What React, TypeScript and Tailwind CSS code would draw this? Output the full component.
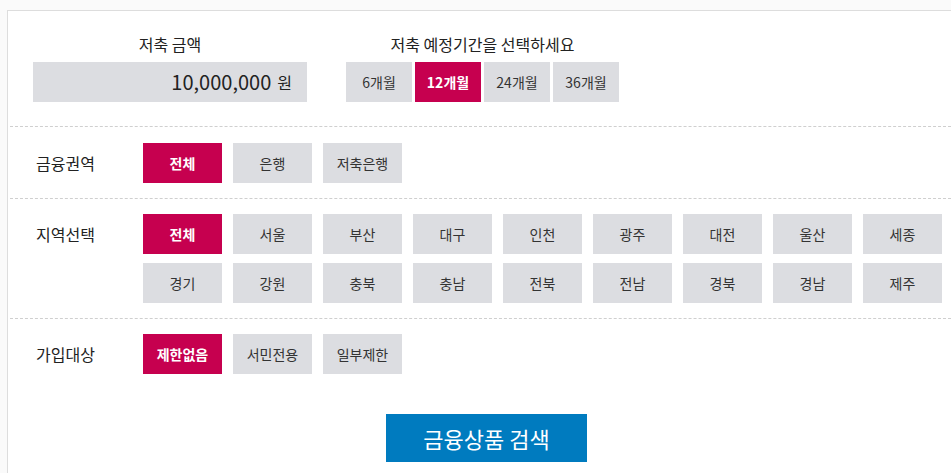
const PERIODS = ['6개월', '12개월', '24개월', '36개월'];
const SECTORS = ['전체', '은행', '저축은행'];
const REGIONS = [
    '전체', '서울', '부산', '대구', '인천', '광주', '대전', '울산', '세종',
    '경기', '강원', '충북', '충남', '전북', '전남', '경북', '경남', '제주',
];
const TARGETS = ['제한없음', '서민전용', '일부제한'];

function OptionButton({ label, active }: { label: string; active?: boolean }) {
    return (
        <button
            type="button"
            className={
                active
                    ? 'flex h-[40px] w-[79px] items-center justify-center bg-[#c6004f] text-[14px] font-bold text-white'
                    : 'flex h-[40px] w-[79px] items-center justify-center bg-[#dcdde1] text-[14px] text-[#333]'
            }
        >
            {label}
        </button>
    );
}

function FilterRow({
    title,
    first,
    children,
}: {
    title: string;
    first?: boolean;
    children: React.ReactNode;
}) {
    return (
        <div
            className={
                first
                    ? 'ml-[2px] flex border-t border-dashed border-[#cfcfcf] pt-[16px] pb-[15px]'
                    : 'ml-[2px] flex border-t border-dashed border-[#cfcfcf] py-[15px]'
            }
        >
            <div className="flex h-[40px] w-[133px] shrink-0 items-center pl-[26px] text-[16px] text-[#222]">
                {title}
            </div>
            {children}
        </div>
    );
}

export default function App() {
    return (
        <div
            className="min-h-[473px] bg-[#fafafa] pt-[10px] pl-[7px]"
            style={{ fontFamily: '"Noto Sans CJK KR", "Noto Sans", sans-serif' }}
        >
            <div className="min-h-[463px] border-t border-l border-[#dddddd] bg-white">
                {/* top: amount + period */}
                <div className="flex gap-[39px] pt-[22px] pb-[24px] pl-[25px]">
                    <div className="flex w-[274px] flex-col">
                        <div className="mb-[7px] h-[22px] text-center text-[16px] leading-[22px] text-[#222]">
                            저축 금액
                        </div>
                        <div className="flex h-[40px] items-center justify-end bg-[#dcdde1] pr-[15px] text-[#222]">
                            <span className="text-[20px] leading-none">10,000,000</span>
                            <span className="ml-[6px] text-[16px] leading-none">원</span>
                        </div>
                    </div>
                    <div className="flex flex-col">
                        <div className="mb-[7px] h-[22px] text-center text-[16px] leading-[22px] text-[#222]">
                            저축 예정기간을 선택하세요
                        </div>
                        <div className="flex gap-[3px]">
                            {PERIODS.map((p) => (
                                <button
                                    key={p}
                                    type="button"
                                    className={
                                        p === '12개월'
                                            ? 'flex h-[40px] w-[66px] items-center justify-center bg-[#c6004f] text-[14px] font-bold text-white'
                                            : 'flex h-[40px] w-[66px] items-center justify-center bg-[#dcdde1] text-[14px] text-[#333]'
                                    }
                                >
                                    {p}
                                </button>
                            ))}
                        </div>
                    </div>
                </div>

                <FilterRow title="금융권역" first>
                    <div className="flex gap-[11px]">
                        {SECTORS.map((s, i) => (
                            <OptionButton key={s} label={s} active={i === 0} />
                        ))}
                    </div>
                </FilterRow>

                <FilterRow title="지역선택">
                    <div className="grid grid-cols-[repeat(9,79px)] gap-x-[11px] gap-y-[9px]">
                        {REGIONS.map((r, i) => (
                            <OptionButton key={r + i} label={r} active={i === 0} />
                        ))}
                    </div>
                </FilterRow>

                <FilterRow title="가입대상">
                    <div className="flex gap-[11px]">
                        {TARGETS.map((t, i) => (
                            <OptionButton key={t} label={t} active={i === 0} />
                        ))}
                    </div>
                </FilterRow>

                <div className="flex justify-center pt-[25px] pl-[14px]">
                    <button
                        type="button"
                        className="flex h-[48px] w-[201px] items-center justify-center bg-[#007bbf] text-[22px] text-white"
                    >
                        금융상품 검색
                    </button>
                </div>
            </div>
        </div>
    );
}
